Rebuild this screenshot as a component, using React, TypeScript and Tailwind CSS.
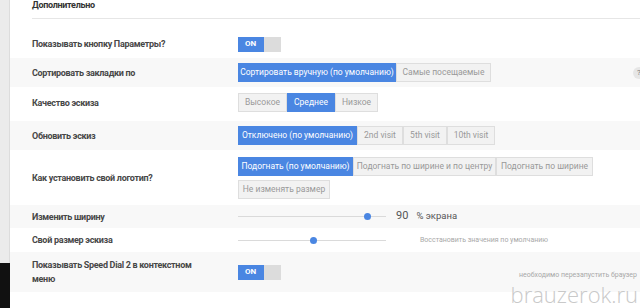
import React from "react";

const font = { fontFamily: 'Roboto, "Liberation Sans", Arial, sans-serif' };

type Opt = { label: string; w: number; active?: boolean };

function Segmented({ options }: { options: Opt[] }) {
  return (
    <div className="flex">
      {options.map((o, i) => (
        <div
          key={i}
          style={{ width: o.w }}
          className={
            o.active
              ? "h-[19px] flex items-center justify-center whitespace-nowrap bg-[#4a86e2] text-white text-[8.5px] border border-[#4a86e2]"
              : "h-[19px] flex items-center justify-center whitespace-nowrap bg-[#f2f2f2] text-[#999] text-[8.5px] border border-[#dedede]"
          }
        >
          {o.label}
        </div>
      ))}
    </div>
  );
}

function Toggle() {
  return (
    <div className="flex h-[15px] w-[43px]">
      <div className="w-[26px] bg-[#4a86e2] text-white text-[8px] font-bold flex items-center pl-[7px]">
        ON
      </div>
      <div className="flex-1 bg-[#dcdcdc]" />
    </div>
  );
}

function Slider({ pos }: { pos: number }) {
  return (
    <div className="relative w-[148px] h-[8px] flex items-center">
      <div className="w-full h-px bg-[#dadada]" />
      <div
        className="absolute w-[7px] h-[7px] rounded-full bg-[#4a86e2]"
        style={{ left: pos - 3 }}
      />
    </div>
  );
}

function Row({
  label,
  children,
  gray,
  className = "",
}: {
  label: React.ReactNode;
  children: React.ReactNode;
  gray?: boolean;
  className?: string;
}) {
  return (
    <div
      className={
        "flex items-center pl-[22px] " +
        (gray ? "bg-[#f8f8f8] " : "bg-white ") +
        className
      }
    >
      <div className="w-[206px] shrink-0 text-[9px] tracking-[-0.3px] font-bold text-[#474747] leading-[14px]">
        {label}
      </div>
      <div className="flex-1 flex items-center">{children}</div>
    </div>
  );
}

export default function App() {
  return (
    <div
      style={font}
      className="relative w-[640px] h-[308px] overflow-hidden bg-white flex"
    >
      <div className="w-[10px] shrink-0 flex flex-col">
        <div className="h-[263px] bg-[#ebebeb] border-r border-[#dcdcdc]" />
        <div className="flex-1 bg-[#111]" />
      </div>

      <div className="flex-1 flex flex-col">
        <div className="pl-[22px] h-[19px] flex flex-col">
          <div className="text-[9px] tracking-[-0.3px] font-bold text-[#333] leading-[12px] -mt-[1px]">
            Дополнительно
          </div>
          <div className="mt-auto h-px bg-[#e6e6e6]" />
        </div>
        <div className="h-[11px]" />

        <Row label="Показывать кнопку Параметры?" className="h-[28px]">
          <Toggle />
        </Row>

        <Row label="Сортировать закладки по" gray className="h-[29px]">
          <Segmented
            options={[
              { label: "Сортировать вручную (по умолчанию)", w: 158, active: true },
              { label: "Самые посещаемые", w: 95 },
            ]}
          />
          <div className="ml-auto mr-[-5px] w-[12px] h-[12px] rounded-full bg-[#e6e6e6] text-[8px] text-[#777] flex items-center justify-center">
            ?
          </div>
        </Row>

        <Row label="Качество эскиза" className="h-[34px] pb-[3px]">
          <Segmented
            options={[
              { label: "Высокое", w: 49 },
              { label: "Среднее", w: 48, active: true },
              { label: "Низкое", w: 43 },
            ]}
          />
        </Row>

        <Row label="Обновить эскиз" gray className="h-[29px]">
          <Segmented
            options={[
              { label: "Отключено (по умолчанию)", w: 119, active: true },
              { label: "2nd visit", w: 46 },
              { label: "5th visit", w: 44 },
              { label: "10th visit", w: 48 },
            ]}
          />
        </Row>

        <Row label="Как установить свой логотип?" className="h-[55px]">
          <div className="flex flex-col gap-[4px]">
            <Segmented
              options={[
                { label: "Подогнать (по умолчанию)", w: 115, active: true },
                { label: "Подогнать по ширине и по центру", w: 143 },
                { label: "Подогнать по ширине", w: 97 },
              ]}
            />
            <Segmented options={[{ label: "Не изменять размер", w: 92 }]} />
          </div>
        </Row>

        <Row label="Изменить ширину" gray className="h-[23px]">
          <Slider pos={129} />
          <span className="ml-[10px] text-[11px] text-[#555]">90</span>
          <span className="ml-[8px] text-[9.5px] text-[#555]">% экрана</span>
        </Row>

        <Row label="Свой размер эскиза" className="h-[24px]">
          <Slider pos={75} />
          <span className="ml-[34px] text-[7px] text-[#a8a8a8]">
            Восстановить значения по умолчанию
          </span>
        </Row>

        <Row
          label={
            <>
              Показывать Speed Dial 2 в контекстном
              <br />
              меню
            </>
          }
          gray
          className="h-[40px]"
        >
          <Toggle />
          <span className="ml-auto mr-[3px] mt-[6px] text-[7px] text-[#a8a8a8]">
            необходимо перезапустить браузер
          </span>
        </Row>
      </div>

      <div
        className="absolute right-[2px] bottom-[1px] text-[22px] font-light text-[#c9c9c9] leading-[26px]"
        style={{ fontFamily: '"Open Sans", sans-serif' }}
      >
        brauzerok.ru
      </div>
    </div>
  );
}
